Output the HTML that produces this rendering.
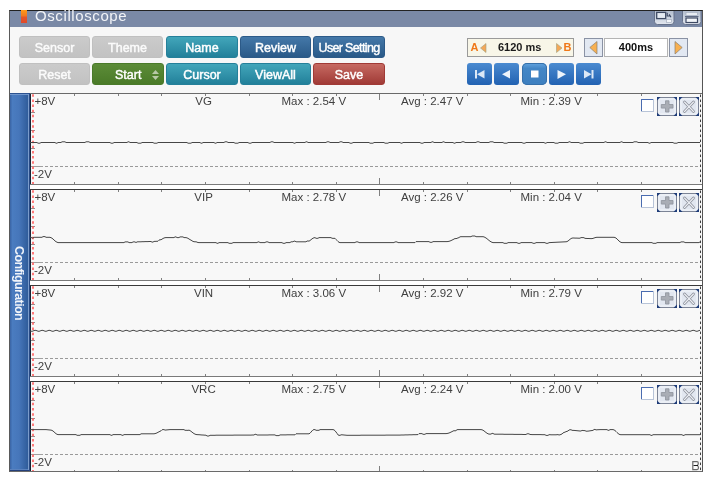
<!DOCTYPE html>
<html><head><meta charset="utf-8">
<style>
html,body{margin:0;padding:0;background:#fff;width:713px;height:481px;overflow:hidden;font-family:"Liberation Sans",sans-serif}
.a{position:absolute}
#frame{left:9px;top:10px;width:692px;height:460px;background:#f7f7f7;border-left:1px solid #5a5a5a;border-top:1px solid #222;border-right:1px solid #555;border-bottom:1px solid #6a6a6a;}
#title{left:10px;top:11px;width:692px;height:16px;background:#7a89a6}
#title .t{left:25px;top:-4px;font-size:15px;color:#f2f4f8;letter-spacing:0.6px}
#orange{left:21px;top:10px;width:6px;height:13px;background:linear-gradient(#ff9a1a,#f07a20 45%,#e4562a 55%,#e04a2a)}
.btn{position:absolute;height:22px;border-radius:3px;color:#fff;font-weight:normal;font-size:12.5px;-webkit-text-stroke:0.45px currentColor;text-align:center;line-height:22px;box-sizing:border-box}
.gray{background:linear-gradient(#cbcbcb,#c2c2c2);color:#fbfbfb;border:1px solid #c0c0c0}
.teal{background:linear-gradient(#42a6ba,#22809a);border:1px solid #25809a}
.blue{background:linear-gradient(#4478a8,#2a5a88);border:1px solid #2c5a88}
.green{background:linear-gradient(#5c8c38,#4a7a28);border:1px solid #4a7a2a}
.red{background:linear-gradient(#c66a62,#a03a36);border:1px solid #a03a36}
.pb{position:absolute;top:63px;width:25px;height:22px;border-radius:3px;background:linear-gradient(#4a8ad0,#2262b2)}
svg text.lb{font-family:"Liberation Sans",sans-serif;font-size:11.5px;fill:#404040}
</style></head><body><div style="position:absolute;left:0;top:0;width:713px;height:481px;will-change:transform">
<div id="frame" class="a"></div>
<div id="title" class="a"><div class="t a">Oscilloscope</div></div>
<div id="orange" class="a"></div>

<div class="btn gray" style="left:19px;top:36px;width:71px">Sensor</div>
<div class="btn gray" style="left:92px;top:36px;width:71px">Theme</div>
<div class="btn teal" style="left:166px;top:36px;width:72px">Name</div>
<div class="btn blue" style="left:240px;top:36px;width:71px">Review</div>
<div class="btn blue" style="left:313px;top:36px;width:72px;letter-spacing:-0.65px">User Setting</div>
<div class="btn gray" style="left:19px;top:63px;width:71px">Reset</div>
<div class="btn green" style="left:92px;top:63px;width:72px"><span style="position:absolute;left:22px;top:0">Start</span><span style="position:absolute;left:59px;top:6px;width:7px;height:10px"><svg width="7" height="10" style="display:block"><path d="M3.5,0 L7,4 L0,4 Z M3.5,10 L7,6 L0,6 Z" fill="#b8c8a8"/></svg></span></div>
<div class="btn teal" style="left:166px;top:63px;width:72px">Cursor</div>
<div class="btn teal" style="left:240px;top:63px;width:71px">ViewAll</div>
<div class="btn red" style="left:313px;top:63px;width:72px">Save</div>

<!-- A/B time box -->
<div class="a" style="left:467px;top:38px;width:105px;height:17px;background:#f8f6e8;border:1px solid #9a9a9a"></div>
<div class="a" style="left:470.5px;top:41.3px;font-size:11px;font-weight:bold;color:#f07818">A</div>
<svg class="a" style="left:479.5px;top:43px" width="7" height="11"><path d="M6,0.5 L0.5,5 L6,9.5 Z" fill="#f4a858" stroke="#a0a080" stroke-width="0.6"/></svg>
<div class="a" style="left:498px;top:40.5px;font-size:11px;font-weight:bold;color:#1a1a1a">6120 ms</div>
<svg class="a" style="left:555.5px;top:43px" width="7" height="11"><path d="M0.5,0.5 L6,5 L0.5,9.5 Z" fill="#f4a858" stroke="#a0a080" stroke-width="0.6"/></svg>
<div class="a" style="left:563.5px;top:41.3px;font-size:11px;font-weight:bold;color:#f07818">B</div>

<!-- 400ms -->
<div class="a" style="left:584px;top:38px;width:17px;height:17px;background:#e2e8f2;border:1px solid #8a92a4"></div>
<svg class="a" style="left:589px;top:41px" width="9" height="14"><path d="M8,0.5 L0.8,6.5 L8,13 Z" fill="#f8b050" stroke="#8a8070" stroke-width="0.7"/></svg>
<div class="a" style="left:604px;top:38px;width:62px;height:17px;background:#fff;border:1px solid #b4b4b4"></div>
<div class="a" style="left:604px;top:40.5px;width:64px;text-align:center;font-size:11px;font-weight:bold;color:#111">400ms</div>
<div class="a" style="left:669px;top:38px;width:17px;height:17px;background:#e2e8f2;border:1px solid #8a92a4"></div>
<svg class="a" style="left:674px;top:41px" width="9" height="14"><path d="M1,0.5 L8.2,6.5 L1,13 Z" fill="#f8b050" stroke="#8a8070" stroke-width="0.7"/></svg>

<!-- playback -->
<div class="pb" style="left:467px"><svg width="25" height="22"><rect x="8" y="7" width="2" height="8.5" fill="#dce8f6"/><path d="M17.5,7 L10,11.25 L17.5,15.5 Z" fill="#dce8f6"/></svg></div>
<div class="pb" style="left:494px"><svg width="25" height="22"><path d="M16,7 L8,11.25 L16,15.5 Z" fill="#eef4fb"/></svg></div>
<div class="pb" style="left:522px;width:25px;border-radius:5px;background:linear-gradient(#62a4e0,#4386c6 25%,#3d7fbf);box-shadow:inset 0 0 0 1px #3670aa"><svg width="25" height="22"><rect x="9" y="7.5" width="7.5" height="7" fill="#fff"/></svg></div>
<div class="pb" style="left:549px"><svg width="25" height="22"><path d="M8.5,7 L17,11.25 L8.5,16 Z" fill="#eef4fb"/></svg></div>
<div class="pb" style="left:576px"><svg width="25" height="22"><path d="M8,7 L15.5,11.25 L8,15.5 Z" fill="#dce8f6"/><rect x="15.5" y="7" width="2" height="8.5" fill="#dce8f6"/></svg></div>

<!-- title icons -->
<svg class="a" style="left:654px;top:11px" width="21" height="15">
 <defs><linearGradient id="ig" x1="0" y1="0" x2="0" y2="1"><stop offset="0" stop-color="#b4bfd0"/><stop offset="1" stop-color="#e2e7ef"/></linearGradient></defs>
 <path d="M0.5,0 V10.5 Q0.5,13.5 3.5,13.5 H17 Q20,13.5 20,10.5 V0" fill="url(#ig)" stroke="#65718a" stroke-width="1"/>
 <rect x="2.7" y="1.4" width="9" height="6.2" fill="#e4eaf2" stroke="#3e4a64" stroke-width="1.3"/>
 <rect x="12.5" y="8.6" width="5" height="3" fill="#f2f5f9" stroke="#9aa4b6" stroke-width="0.6"/>
 <path d="M13.2,1.8 V5 H16.2 M15.2,3.4 L17,6.2" stroke="#3a4660" stroke-width="1.1" fill="none"/>
</svg>
<svg class="a" style="left:682px;top:11px" width="20" height="15">
 <path d="M0.5,0 V10.5 Q0.5,13.5 3.5,13.5 H16 Q19,13.5 19,10.5 V0" fill="url(#ig)" stroke="#65718a" stroke-width="1"/>
 <rect x="4" y="1.4" width="11.5" height="3" fill="#e8edf4" stroke="#9aa4b6" stroke-width="0.6"/>
 <rect x="3" y="5" width="13.5" height="1" fill="#5e6a84"/>
 <rect x="4" y="7" width="11.5" height="4.5" fill="#f2f5f9" stroke="#3e4a64" stroke-width="1.2"/>
</svg>

<!-- sidebar -->
<div class="a" style="left:10px;top:93px;width:18px;height:378px;background:linear-gradient(90deg,#3a64a4 0px,#4a7cc0 2.5px,#4676ba 50%,#2f5c9a 100%)"></div>
<div class="a" style="left:10px;top:93px;width:20px;height:1px;background:#2c5290"></div>
<div class="a" style="left:10px;top:94px;width:18px;height:1px;background:#7096cc"></div>
<div class="a" style="left:10px;top:469px;width:18px;height:1px;background:#5a82be"></div>
<div class="a" style="left:10px;top:470px;width:20px;height:1px;background:#24407a"></div>
<div class="a" style="left:28px;top:94px;width:1px;height:376px;background:#7a9ccc"></div>
<div class="a" style="left:29px;top:93px;width:1px;height:378px;background:#2a4c86"></div>
<div class="a" style="left:30px;top:93px;width:1px;height:378px;background:#1a2232"></div>
<div class="a" style="left:13px;top:246px;width:74px;height:12px;transform-origin:0 0;transform:translate(12px,0) rotate(90deg);font-size:12.5px;font-weight:bold;color:#f0f4fa;letter-spacing:-0.6px;line-height:12px;white-space:nowrap">Configuration</div>

<svg class="a" style="left:0;top:0" width="702" height="471">
<rect x="31" y="93" width="671" height="91" fill="#f8f8f8"/>
<rect x="30" y="93" width="672" height="1" fill="#6a6a6a"/>
<rect x="30" y="184" width="672" height="1" fill="#7a7a7a"/>
<rect x="74" y="94" width="1" height="2" fill="#808080"/>
<rect x="74" y="182" width="1" height="2" fill="#808080"/>
<rect x="118" y="94" width="1" height="2" fill="#808080"/>
<rect x="118" y="182" width="1" height="2" fill="#808080"/>
<rect x="161" y="94" width="1" height="2" fill="#808080"/>
<rect x="161" y="182" width="1" height="2" fill="#808080"/>
<rect x="205" y="94" width="1" height="2" fill="#808080"/>
<rect x="205" y="182" width="1" height="2" fill="#808080"/>
<rect x="249" y="94" width="1" height="2" fill="#808080"/>
<rect x="249" y="182" width="1" height="2" fill="#808080"/>
<rect x="292" y="94" width="1" height="2" fill="#808080"/>
<rect x="292" y="182" width="1" height="2" fill="#808080"/>
<rect x="336" y="94" width="1" height="2" fill="#808080"/>
<rect x="336" y="182" width="1" height="2" fill="#808080"/>
<rect x="379" y="94" width="1" height="6" fill="#808080"/>
<rect x="379" y="178" width="1" height="6" fill="#808080"/>
<rect x="423" y="94" width="1" height="2" fill="#808080"/>
<rect x="423" y="182" width="1" height="2" fill="#808080"/>
<rect x="467" y="94" width="1" height="2" fill="#808080"/>
<rect x="467" y="182" width="1" height="2" fill="#808080"/>
<rect x="510" y="94" width="1" height="2" fill="#808080"/>
<rect x="510" y="182" width="1" height="2" fill="#808080"/>
<rect x="554" y="94" width="1" height="2" fill="#808080"/>
<rect x="554" y="182" width="1" height="2" fill="#808080"/>
<rect x="597" y="94" width="1" height="2" fill="#808080"/>
<rect x="597" y="182" width="1" height="2" fill="#808080"/>
<rect x="641" y="94" width="1" height="2" fill="#808080"/>
<rect x="641" y="182" width="1" height="2" fill="#808080"/>
<rect x="31" y="112" width="4" height="1" fill="#909090"/>
<rect x="31" y="130" width="4" height="1" fill="#909090"/>
<rect x="31" y="148" width="4" height="1" fill="#909090"/>
<rect x="31" y="166" width="12" height="1" fill="#a0a0a0"/>
<line x1="45" y1="166.5" x2="700" y2="166.5" stroke="#9a9a9a" stroke-width="1" stroke-dasharray="3,2"/>
<line x1="700.5" y1="94.55" x2="700.5" y2="184" stroke="#404040" stroke-width="1" stroke-dasharray="2.5,2.5"/>
<line x1="33" y1="94.25" x2="33" y2="184" stroke="#ff5a5a" stroke-width="1.6" stroke-dasharray="2.5,2.656"/>
<path d="M30.0,142.5 L31.0,142.5 L32.0,142.5 L33.0,142.5 L34.0,142.5 L35.0,142.5 L36.0,142.5 L37.0,142.5 L38.0,143.2 L39.0,143.2 L40.0,143.2 L41.0,142.5 L42.0,142.5 L43.0,142.5 L44.0,142.5 L45.0,142.5 L46.0,142.5 L47.0,142.5 L48.0,142.5 L49.0,142.5 L50.0,142.5 L51.0,142.5 L52.0,142.5 L53.0,142.5 L54.0,142.5 L55.0,142.5 L56.0,143.2 L57.0,143.2 L58.0,142.5 L59.0,142.5 L60.0,142.5 L61.0,142.5 L62.0,141.8 L63.0,141.8 L64.0,141.8 L65.0,141.8 L66.0,142.5 L67.0,142.5 L68.0,142.5 L69.0,142.5 L70.0,142.5 L71.0,142.5 L72.0,142.5 L73.0,142.5 L74.0,142.5 L75.0,142.5 L76.0,142.5 L77.0,142.5 L78.0,142.5 L79.0,142.5 L80.0,142.5 L81.0,142.5 L82.0,142.5 L83.0,142.5 L84.0,142.5 L85.0,142.5 L86.0,141.8 L87.0,141.8 L88.0,141.8 L89.0,141.8 L90.0,142.5 L91.0,142.5 L92.0,142.5 L93.0,142.5 L94.0,142.5 L95.0,142.5 L96.0,142.5 L97.0,142.5 L98.0,142.5 L99.0,142.5 L100.0,142.5 L101.0,142.5 L102.0,142.5 L103.0,142.5 L104.0,142.5 L105.0,142.5 L106.0,142.5 L107.0,142.5 L108.0,142.5 L109.0,142.5 L110.0,142.5 L111.0,143.2 L112.0,143.2 L113.0,143.2 L114.0,142.5 L115.0,142.5 L116.0,142.5 L117.0,142.5 L118.0,142.5 L119.0,142.5 L120.0,142.5 L121.0,142.5 L122.0,142.5 L123.0,142.5 L124.0,142.5 L125.0,142.5 L126.0,142.5 L127.0,142.5 L128.0,141.8 L129.0,141.8 L130.0,142.5 L131.0,142.5 L132.0,142.5 L133.0,142.5 L134.0,142.5 L135.0,142.5 L136.0,142.5 L137.0,142.5 L138.0,143.2 L139.0,143.2 L140.0,143.2 L141.0,143.2 L142.0,142.5 L143.0,142.5 L144.0,142.5 L145.0,142.5 L146.0,142.5 L147.0,142.5 L148.0,142.5 L149.0,142.5 L150.0,142.5 L151.0,142.5 L152.0,142.5 L153.0,142.5 L154.0,143.2 L155.0,143.2 L156.0,143.2 L157.0,143.2 L158.0,142.5 L159.0,142.5 L160.0,142.5 L161.0,142.5 L162.0,142.5 L163.0,142.5 L164.0,142.5 L165.0,142.5 L166.0,142.5 L167.0,142.5 L168.0,142.5 L169.0,142.5 L170.0,142.5 L171.0,142.5 L172.0,142.5 L173.0,142.5 L174.0,142.5 L175.0,142.5 L176.0,142.5 L177.0,142.5 L178.0,142.5 L179.0,142.5 L180.0,142.5 L181.0,142.5 L182.0,142.5 L183.0,142.5 L184.0,142.5 L185.0,142.5 L186.0,142.5 L187.0,142.5 L188.0,143.2 L189.0,143.2 L190.0,143.2 L191.0,143.2 L192.0,142.5 L193.0,142.5 L194.0,142.5 L195.0,142.5 L196.0,142.5 L197.0,142.5 L198.0,142.5 L199.0,142.5 L200.0,142.5 L201.0,143.2 L202.0,143.2 L203.0,142.5 L204.0,142.5 L205.0,142.5 L206.0,142.5 L207.0,142.5 L208.0,142.5 L209.0,142.5 L210.0,142.5 L211.0,142.5 L212.0,142.5 L213.0,142.5 L214.0,142.5 L215.0,143.2 L216.0,143.2 L217.0,142.5 L218.0,142.5 L219.0,142.5 L220.0,142.5 L221.0,142.5 L222.0,142.5 L223.0,142.5 L224.0,142.5 L225.0,141.8 L226.0,141.8 L227.0,141.8 L228.0,142.5 L229.0,142.5 L230.0,142.5 L231.0,142.5 L232.0,142.5 L233.0,142.5 L234.0,142.5 L235.0,143.2 L236.0,143.2 L237.0,143.2 L238.0,143.2 L239.0,142.5 L240.0,142.5 L241.0,142.5 L242.0,142.5 L243.0,142.5 L244.0,142.5 L245.0,142.5 L246.0,142.5 L247.0,142.5 L248.0,142.5 L249.0,143.2 L250.0,143.2 L251.0,143.2 L252.0,142.5 L253.0,142.5 L254.0,142.5 L255.0,142.5 L256.0,142.5 L257.0,142.5 L258.0,142.5 L259.0,142.5 L260.0,142.5 L261.0,142.5 L262.0,142.5 L263.0,142.5 L264.0,142.5 L265.0,142.5 L266.0,142.5 L267.0,142.5 L268.0,142.5 L269.0,142.5 L270.0,142.5 L271.0,141.8 L272.0,141.8 L273.0,141.8 L274.0,142.5 L275.0,142.5 L276.0,142.5 L277.0,142.5 L278.0,142.5 L279.0,142.5 L280.0,142.5 L281.0,142.5 L282.0,142.5 L283.0,142.5 L284.0,142.5 L285.0,142.5 L286.0,142.5 L287.0,142.5 L288.0,142.5 L289.0,142.5 L290.0,142.5 L291.0,142.5 L292.0,142.5 L293.0,142.5 L294.0,143.2 L295.0,143.2 L296.0,142.5 L297.0,142.5 L298.0,142.5 L299.0,142.5 L300.0,142.5 L301.0,142.5 L302.0,142.5 L303.0,142.5 L304.0,142.5 L305.0,142.5 L306.0,141.8 L307.0,141.8 L308.0,142.5 L309.0,142.5 L310.0,142.5 L311.0,142.5 L312.0,142.5 L313.0,142.5 L314.0,142.5 L315.0,142.5 L316.0,142.5 L317.0,142.5 L318.0,142.5 L319.0,142.5 L320.0,142.5 L321.0,142.5 L322.0,142.5 L323.0,142.5 L324.0,142.5 L325.0,142.5 L326.0,142.5 L327.0,141.8 L328.0,141.8 L329.0,141.8 L330.0,142.5 L331.0,142.5 L332.0,142.5 L333.0,142.5 L334.0,142.5 L335.0,142.5 L336.0,142.5 L337.0,142.5 L338.0,142.5 L339.0,142.5 L340.0,141.8 L341.0,141.8 L342.0,141.8 L343.0,142.5 L344.0,142.5 L345.0,142.5 L346.0,142.5 L347.0,142.5 L348.0,142.5 L349.0,142.5 L350.0,143.2 L351.0,143.2 L352.0,143.2 L353.0,142.5 L354.0,142.5 L355.0,142.5 L356.0,142.5 L357.0,142.5 L358.0,142.5 L359.0,142.5 L360.0,142.5 L361.0,142.5 L362.0,142.5 L363.0,142.5 L364.0,142.5 L365.0,142.5 L366.0,142.5 L367.0,142.5 L368.0,142.5 L369.0,142.5 L370.0,143.2 L371.0,143.2 L372.0,143.2 L373.0,143.2 L374.0,142.5 L375.0,142.5 L376.0,142.5 L377.0,142.5 L378.0,142.5 L379.0,142.5 L380.0,142.5 L381.0,142.5 L382.0,142.5 L383.0,142.5 L384.0,142.5 L385.0,143.2 L386.0,143.2 L387.0,143.2 L388.0,143.2 L389.0,142.5 L390.0,142.5 L391.0,142.5 L392.0,142.5 L393.0,142.5 L394.0,142.5 L395.0,142.5 L396.0,142.5 L397.0,142.5 L398.0,142.5 L399.0,142.5 L400.0,142.5 L401.0,143.2 L402.0,143.2 L403.0,142.5 L404.0,142.5 L405.0,142.5 L406.0,142.5 L407.0,142.5 L408.0,142.5 L409.0,142.5 L410.0,142.5 L411.0,142.5 L412.0,142.5 L413.0,142.5 L414.0,142.5 L415.0,142.5 L416.0,142.5 L417.0,142.5 L418.0,142.5 L419.0,142.5 L420.0,142.5 L421.0,143.2 L422.0,143.2 L423.0,143.2 L424.0,142.5 L425.0,142.5 L426.0,142.5 L427.0,142.5 L428.0,142.5 L429.0,142.5 L430.0,142.5 L431.0,142.5 L432.0,141.8 L433.0,141.8 L434.0,142.5 L435.0,142.5 L436.0,142.5 L437.0,142.5 L438.0,142.5 L439.0,142.5 L440.0,142.5 L441.0,142.5 L442.0,142.5 L443.0,141.8 L444.0,141.8 L445.0,142.5 L446.0,142.5 L447.0,142.5 L448.0,142.5 L449.0,142.5 L450.0,142.5 L451.0,142.5 L452.0,142.5 L453.0,142.5 L454.0,143.2 L455.0,143.2 L456.0,142.5 L457.0,142.5 L458.0,142.5 L459.0,142.5 L460.0,142.5 L461.0,142.5 L462.0,141.8 L463.0,141.8 L464.0,141.8 L465.0,142.5 L466.0,142.5 L467.0,142.5 L468.0,142.5 L469.0,142.5 L470.0,142.5 L471.0,142.5 L472.0,142.5 L473.0,142.5 L474.0,142.5 L475.0,142.5 L476.0,142.5 L477.0,141.8 L478.0,141.8 L479.0,141.8 L480.0,142.5 L481.0,142.5 L482.0,142.5 L483.0,142.5 L484.0,142.5 L485.0,142.5 L486.0,142.5 L487.0,142.5 L488.0,142.5 L489.0,142.5 L490.0,141.8 L491.0,141.8 L492.0,141.8 L493.0,141.8 L494.0,142.5 L495.0,142.5 L496.0,142.5 L497.0,142.5 L498.0,142.5 L499.0,142.5 L500.0,142.5 L501.0,142.5 L502.0,142.5 L503.0,142.5 L504.0,143.2 L505.0,143.2 L506.0,143.2 L507.0,143.2 L508.0,142.5 L509.0,142.5 L510.0,142.5 L511.0,142.5 L512.0,142.5 L513.0,142.5 L514.0,142.5 L515.0,142.5 L516.0,142.5 L517.0,142.5 L518.0,142.5 L519.0,142.5 L520.0,142.5 L521.0,142.5 L522.0,142.5 L523.0,143.2 L524.0,143.2 L525.0,143.2 L526.0,142.5 L527.0,142.5 L528.0,142.5 L529.0,142.5 L530.0,142.5 L531.0,142.5 L532.0,142.5 L533.0,142.5 L534.0,142.5 L535.0,142.5 L536.0,142.5 L537.0,142.5 L538.0,142.5 L539.0,142.5 L540.0,142.5 L541.0,142.5 L542.0,142.5 L543.0,142.5 L544.0,142.5 L545.0,143.2 L546.0,143.2 L547.0,142.5 L548.0,142.5 L549.0,142.5 L550.0,142.5 L551.0,142.5 L552.0,142.5 L553.0,142.5 L554.0,142.5 L555.0,143.2 L556.0,143.2 L557.0,143.2 L558.0,143.2 L559.0,142.5 L560.0,142.5 L561.0,142.5 L562.0,142.5 L563.0,142.5 L564.0,142.5 L565.0,142.5 L566.0,142.5 L567.0,142.5 L568.0,142.5 L569.0,141.8 L570.0,141.8 L571.0,142.5 L572.0,142.5 L573.0,142.5 L574.0,142.5 L575.0,142.5 L576.0,142.5 L577.0,142.5 L578.0,142.5 L579.0,142.5 L580.0,143.2 L581.0,143.2 L582.0,143.2 L583.0,143.2 L584.0,142.5 L585.0,142.5 L586.0,142.5 L587.0,142.5 L588.0,142.5 L589.0,142.5 L590.0,142.5 L591.0,142.5 L592.0,142.5 L593.0,142.5 L594.0,142.5 L595.0,142.5 L596.0,142.5 L597.0,142.5 L598.0,142.5 L599.0,142.5 L600.0,142.5 L601.0,142.5 L602.0,142.5 L603.0,142.5 L604.0,142.5 L605.0,141.8 L606.0,141.8 L607.0,142.5 L608.0,142.5 L609.0,142.5 L610.0,142.5 L611.0,142.5 L612.0,142.5 L613.0,142.5 L614.0,142.5 L615.0,142.5 L616.0,142.5 L617.0,142.5 L618.0,142.5 L619.0,142.5 L620.0,142.5 L621.0,141.8 L622.0,141.8 L623.0,142.5 L624.0,142.5 L625.0,142.5 L626.0,142.5 L627.0,142.5 L628.0,142.5 L629.0,142.5 L630.0,142.5 L631.0,142.5 L632.0,142.5 L633.0,142.5 L634.0,141.8 L635.0,141.8 L636.0,141.8 L637.0,141.8 L638.0,142.5 L639.0,142.5 L640.0,142.5 L641.0,142.5 L642.0,142.5 L643.0,142.5 L644.0,142.5 L645.0,142.5 L646.0,142.5 L647.0,142.5 L648.0,142.5 L649.0,143.2 L650.0,143.2 L651.0,142.5 L652.0,142.5 L653.0,142.5 L654.0,142.5 L655.0,142.5 L656.0,142.5 L657.0,142.5 L658.0,142.5 L659.0,142.5 L660.0,142.5 L661.0,142.5 L662.0,142.5 L663.0,142.5 L664.0,142.5 L665.0,142.5 L666.0,142.5 L667.0,142.5 L668.0,142.5 L669.0,142.5 L670.0,142.5 L671.0,142.5 L672.0,142.5 L673.0,142.5 L674.0,143.2 L675.0,143.2 L676.0,143.2 L677.0,143.2 L678.0,142.5 L679.0,142.5 L680.0,142.5 L681.0,142.5 L682.0,142.5 L683.0,142.5 L684.0,142.5 L685.0,142.5 L686.0,142.5 L687.0,142.5 L688.0,142.5 L689.0,142.5 L690.0,142.5 L691.0,142.5 L692.0,142.5 L693.0,142.5 L694.0,142.5 L695.0,142.5 L696.0,142.5 L697.0,142.5 L698.0,142.5 L699.0,142.5 L700.0,142.5" fill="none" stroke="#464646" stroke-width="1"/>
<text x="34.5" y="105" class="lb">+8V</text>
<text x="34" y="178" class="lb">-2V</text>
<text x="203.6" y="105" class="lb" text-anchor="middle">VG</text>
<text x="281.5" y="105" class="lb">Max : 2.54 V</text>
<text x="401" y="105" class="lb">Avg : 2.47 V</text>
<text x="520.5" y="105" class="lb">Min : 2.39 V</text>
<rect x="641" y="99" width="13" height="13" fill="#b8c4d8"/><rect x="641" y="99" width="12" height="12" fill="#4a6cb0"/><rect x="642" y="100" width="11" height="11" fill="#fff"/>
<rect x="657.5" y="97.5" width="19" height="18" fill="#e2e7f0" stroke="#7c8496" stroke-width="1"/>
<rect x="659" y="99" width="16" height="15" rx="1.5" fill="none" stroke="#f4f7fb" stroke-width="1"/>
<path transform="translate(657,97)" d="M0,0 h3.5 l-3.5,3.5 z" fill="#1e3c78"/>
<path transform="translate(677,97)" d="M0,0 h-3.5 l3.5,3.5 z" fill="#1e3c78"/>
<path transform="translate(657,116)" d="M0,0 h3.5 l-3.5,-3.5 z" fill="#1e3c78"/>
<path transform="translate(677,116)" d="M0,0 h-3.5 l3.5,-3.5 z" fill="#1e3c78"/>
<path d="M665.5,100.8 h3.5 v3.7 h4 v3.6 h-4 v3.9 h-3.5 v-3.9 h-4.2 v-3.6 h4.2 z" fill="#a9adb5" stroke="#8e939c" stroke-width="0.8"/>
<rect x="679.5" y="97.5" width="19" height="18" fill="#e2e7f0" stroke="#7c8496" stroke-width="1"/>
<rect x="681" y="99" width="16" height="15" rx="1.5" fill="none" stroke="#f4f7fb" stroke-width="1"/>
<path transform="translate(679,97)" d="M0,0 h3.5 l-3.5,3.5 z" fill="#1e3c78"/>
<path transform="translate(699,97)" d="M0,0 h-3.5 l3.5,3.5 z" fill="#1e3c78"/>
<path transform="translate(679,116)" d="M0,0 h3.5 l-3.5,-3.5 z" fill="#1e3c78"/>
<path transform="translate(699,116)" d="M0,0 h-3.5 l3.5,-3.5 z" fill="#1e3c78"/>
<path d="M684.5,102 L693.5,111.5 M693.5,102 L684.5,111.5" stroke="#8a8e98" stroke-width="2.6" stroke-linecap="round"/>
<path d="M684.5,102 L693.5,111.5 M693.5,102 L684.5,111.5" stroke="#eef1f6" stroke-width="1.1" stroke-linecap="round"/>
<rect x="30" y="185" width="672" height="4" fill="#ffffff"/>
<rect x="30" y="189" width="672" height="1" fill="#404040"/>
<rect x="31" y="189" width="671" height="91" fill="#f8f8f8"/>
<rect x="30" y="189" width="672" height="1" fill="#3a3a3a"/>
<rect x="30" y="280" width="672" height="1" fill="#7a7a7a"/>
<rect x="74" y="190" width="1" height="2" fill="#808080"/>
<rect x="74" y="278" width="1" height="2" fill="#808080"/>
<rect x="118" y="190" width="1" height="2" fill="#808080"/>
<rect x="118" y="278" width="1" height="2" fill="#808080"/>
<rect x="161" y="190" width="1" height="2" fill="#808080"/>
<rect x="161" y="278" width="1" height="2" fill="#808080"/>
<rect x="205" y="190" width="1" height="2" fill="#808080"/>
<rect x="205" y="278" width="1" height="2" fill="#808080"/>
<rect x="249" y="190" width="1" height="2" fill="#808080"/>
<rect x="249" y="278" width="1" height="2" fill="#808080"/>
<rect x="292" y="190" width="1" height="2" fill="#808080"/>
<rect x="292" y="278" width="1" height="2" fill="#808080"/>
<rect x="336" y="190" width="1" height="2" fill="#808080"/>
<rect x="336" y="278" width="1" height="2" fill="#808080"/>
<rect x="379" y="190" width="1" height="6" fill="#808080"/>
<rect x="379" y="274" width="1" height="6" fill="#808080"/>
<rect x="423" y="190" width="1" height="2" fill="#808080"/>
<rect x="423" y="278" width="1" height="2" fill="#808080"/>
<rect x="467" y="190" width="1" height="2" fill="#808080"/>
<rect x="467" y="278" width="1" height="2" fill="#808080"/>
<rect x="510" y="190" width="1" height="2" fill="#808080"/>
<rect x="510" y="278" width="1" height="2" fill="#808080"/>
<rect x="554" y="190" width="1" height="2" fill="#808080"/>
<rect x="554" y="278" width="1" height="2" fill="#808080"/>
<rect x="597" y="190" width="1" height="2" fill="#808080"/>
<rect x="597" y="278" width="1" height="2" fill="#808080"/>
<rect x="641" y="190" width="1" height="2" fill="#808080"/>
<rect x="641" y="278" width="1" height="2" fill="#808080"/>
<rect x="31" y="208" width="4" height="1" fill="#909090"/>
<rect x="31" y="226" width="4" height="1" fill="#909090"/>
<rect x="31" y="244" width="4" height="1" fill="#909090"/>
<rect x="31" y="262" width="12" height="1" fill="#a0a0a0"/>
<line x1="45" y1="262.5" x2="700" y2="262.5" stroke="#9a9a9a" stroke-width="1" stroke-dasharray="3,2"/>
<line x1="700.5" y1="190.55" x2="700.5" y2="280" stroke="#404040" stroke-width="1" stroke-dasharray="2.5,2.5"/>
<line x1="33" y1="190.25" x2="33" y2="280" stroke="#ff5a5a" stroke-width="1.6" stroke-dasharray="2.5,2.656"/>
<path d="M30.0,237.3 L31.0,237.3 L32.0,238.0 L33.0,238.0 L34.0,237.3 L35.0,237.3 L36.0,237.3 L37.0,237.3 L38.0,237.3 L39.0,237.3 L40.0,237.3 L41.0,237.3 L42.0,237.3 L43.0,236.6 L44.0,236.6 L45.0,236.6 L46.0,237.3 L47.0,237.3 L48.0,237.3 L49.0,237.3 L50.0,237.3 L51.0,237.7 L52.0,238.2 L53.0,239.0 L54.0,240.0 L55.0,240.9 L56.0,241.7 L57.0,242.2 L58.0,242.6 L59.0,242.6 L60.0,242.6 L61.0,242.6 L62.0,242.6 L63.0,242.6 L64.0,242.6 L65.0,242.6 L66.0,242.6 L67.0,242.6 L68.0,242.6 L69.0,242.6 L70.0,242.6 L71.0,242.6 L72.0,242.6 L73.0,242.6 L74.0,242.6 L75.0,242.6 L76.0,242.6 L77.0,242.6 L78.0,242.6 L79.0,242.6 L80.0,242.6 L81.0,242.6 L82.0,242.6 L83.0,242.6 L84.0,242.6 L85.0,242.6 L86.0,242.6 L87.0,242.6 L88.0,242.6 L89.0,242.6 L90.0,242.6 L91.0,242.6 L92.0,242.6 L93.0,242.6 L94.0,242.6 L95.0,242.6 L96.0,242.6 L97.0,242.6 L98.0,242.6 L99.0,242.6 L100.0,242.6 L101.0,242.6 L102.0,242.6 L103.0,242.6 L104.0,242.6 L105.0,242.6 L106.0,242.6 L107.0,242.6 L108.0,242.6 L109.0,242.6 L110.0,242.6 L111.0,242.6 L112.0,242.6 L113.0,242.6 L114.0,242.6 L115.0,242.6 L116.0,242.6 L117.0,242.6 L118.0,242.6 L119.0,242.6 L120.0,242.6 L121.0,242.6 L122.0,242.6 L123.0,242.6 L124.0,242.6 L125.0,241.9 L126.0,241.9 L127.0,241.9 L128.0,241.9 L129.0,242.6 L130.0,242.6 L131.0,242.6 L132.0,242.6 L133.0,241.9 L134.0,241.9 L135.0,241.9 L136.0,242.6 L137.0,241.9 L138.0,241.8 L139.0,241.8 L140.0,241.8 L141.0,241.8 L142.0,241.7 L143.0,241.7 L144.0,241.7 L145.0,241.6 L146.0,241.6 L147.0,241.6 L148.0,241.6 L149.0,241.5 L150.0,241.5 L151.0,241.5 L152.0,242.1 L153.0,242.1 L154.0,241.4 L155.0,241.4 L156.0,241.3 L157.0,241.3 L158.0,241.2 L159.0,240.2 L160.0,239.7 L161.0,239.8 L162.0,239.1 L163.0,238.5 L164.0,238.0 L165.0,237.7 L166.0,237.6 L167.0,237.6 L168.0,237.6 L169.0,237.6 L170.0,237.6 L171.0,237.6 L172.0,237.6 L173.0,237.6 L174.0,237.6 L175.0,236.9 L176.0,236.9 L177.0,237.6 L178.0,237.6 L179.0,237.6 L180.0,236.9 L181.0,236.9 L182.0,236.9 L183.0,236.9 L184.0,237.6 L185.0,237.6 L186.0,237.6 L187.0,237.9 L188.0,238.3 L189.0,239.0 L190.0,239.6 L191.0,240.2 L192.0,240.7 L193.0,241.5 L194.0,241.6 L195.0,241.9 L196.0,241.7 L197.0,242.2 L198.0,242.5 L199.0,242.6 L200.0,242.6 L201.0,242.6 L202.0,242.6 L203.0,242.6 L204.0,242.6 L205.0,242.6 L206.0,242.6 L207.0,242.6 L208.0,242.6 L209.0,242.6 L210.0,242.6 L211.0,242.6 L212.0,242.6 L213.0,242.6 L214.0,242.6 L215.0,242.6 L216.0,242.6 L217.0,243.3 L218.0,243.3 L219.0,242.6 L220.0,242.6 L221.0,242.6 L222.0,242.6 L223.0,242.6 L224.0,242.6 L225.0,242.6 L226.0,242.6 L227.0,242.6 L228.0,242.6 L229.0,243.3 L230.0,243.3 L231.0,243.3 L232.0,243.3 L233.0,242.6 L234.0,242.6 L235.0,242.6 L236.0,242.6 L237.0,242.6 L238.0,242.6 L239.0,242.6 L240.0,242.6 L241.0,242.6 L242.0,242.6 L243.0,242.6 L244.0,242.6 L245.0,242.6 L246.0,242.6 L247.0,242.6 L248.0,242.6 L249.0,242.6 L250.0,242.6 L251.0,242.6 L252.0,242.6 L253.0,242.6 L254.0,242.6 L255.0,242.6 L256.0,242.6 L257.0,242.6 L258.0,241.9 L259.0,241.9 L260.0,242.6 L261.0,242.6 L262.0,242.6 L263.0,242.6 L264.0,242.6 L265.0,242.6 L266.0,241.9 L267.0,241.9 L268.0,241.9 L269.0,242.6 L270.0,242.6 L271.0,242.6 L272.0,242.6 L273.0,242.6 L274.0,242.6 L275.0,242.6 L276.0,242.6 L277.0,242.6 L278.0,242.6 L279.0,242.6 L280.0,242.6 L281.0,242.6 L282.0,242.6 L283.0,243.3 L284.0,243.3 L285.0,243.3 L286.0,242.6 L287.0,242.6 L288.0,242.6 L289.0,242.6 L290.0,242.6 L291.0,241.8 L292.0,241.8 L293.0,241.8 L294.0,241.1 L295.0,241.1 L296.0,241.8 L297.0,241.8 L298.0,241.8 L299.0,241.8 L300.0,241.8 L301.0,241.8 L302.0,241.8 L303.0,241.8 L304.0,241.8 L305.0,241.8 L306.0,241.8 L307.0,241.1 L308.0,240.9 L309.0,241.2 L310.0,240.5 L311.0,239.7 L312.0,238.9 L313.0,238.2 L314.0,237.8 L315.0,237.6 L316.0,238.3 L317.0,238.3 L318.0,238.3 L319.0,237.6 L320.0,237.6 L321.0,237.6 L322.0,237.6 L323.0,237.6 L324.0,237.6 L325.0,237.6 L326.0,237.6 L327.0,237.6 L328.0,237.6 L329.0,237.6 L330.0,237.6 L331.0,237.6 L332.0,238.3 L333.0,238.3 L334.0,238.4 L335.0,238.3 L336.0,239.3 L337.0,240.5 L338.0,241.5 L339.0,242.3 L340.0,242.6 L341.0,242.6 L342.0,242.6 L343.0,242.6 L344.0,242.6 L345.0,242.6 L346.0,242.6 L347.0,242.6 L348.0,242.6 L349.0,242.6 L350.0,242.6 L351.0,242.6 L352.0,242.6 L353.0,242.6 L354.0,242.6 L355.0,242.6 L356.0,241.9 L357.0,241.9 L358.0,241.9 L359.0,242.6 L360.0,242.6 L361.0,242.6 L362.0,242.6 L363.0,242.6 L364.0,242.6 L365.0,242.6 L366.0,242.6 L367.0,242.6 L368.0,242.6 L369.0,242.6 L370.0,242.6 L371.0,242.6 L372.0,242.6 L373.0,242.6 L374.0,242.6 L375.0,242.6 L376.0,242.6 L377.0,242.6 L378.0,242.6 L379.0,242.6 L380.0,242.6 L381.0,242.6 L382.0,242.6 L383.0,242.6 L384.0,242.6 L385.0,242.6 L386.0,242.6 L387.0,242.6 L388.0,242.6 L389.0,242.6 L390.0,242.6 L391.0,242.6 L392.0,242.6 L393.0,242.6 L394.0,242.6 L395.0,241.9 L396.0,241.9 L397.0,241.9 L398.0,242.6 L399.0,242.6 L400.0,242.6 L401.0,242.6 L402.0,242.6 L403.0,242.6 L404.0,242.6 L405.0,242.6 L406.0,242.6 L407.0,242.6 L408.0,242.6 L409.0,242.6 L410.0,242.6 L411.0,242.6 L412.0,242.6 L413.0,242.6 L414.0,242.6 L415.0,242.6 L416.0,241.6 L417.0,241.6 L418.0,241.6 L419.0,241.6 L420.0,241.6 L421.0,241.6 L422.0,241.6 L423.0,241.6 L424.0,241.6 L425.0,241.6 L426.0,241.6 L427.0,241.6 L428.0,241.6 L429.0,241.6 L430.0,242.3 L431.0,242.3 L432.0,242.3 L433.0,241.6 L434.0,241.6 L435.0,241.6 L436.0,241.6 L437.0,241.6 L438.0,241.6 L439.0,241.6 L440.0,241.6 L441.0,241.6 L442.0,241.6 L443.0,241.6 L444.0,241.6 L445.0,241.6 L446.0,241.6 L447.0,241.6 L448.0,241.5 L449.0,241.3 L450.0,241.0 L451.0,240.6 L452.0,240.1 L453.0,239.6 L454.0,239.1 L455.0,238.5 L456.0,238.7 L457.0,238.3 L458.0,237.9 L459.0,237.6 L460.0,236.8 L461.0,236.7 L462.0,236.7 L463.0,236.7 L464.0,236.7 L465.0,236.7 L466.0,236.7 L467.0,236.7 L468.0,236.7 L469.0,236.7 L470.0,236.7 L471.0,236.7 L472.0,236.0 L473.0,236.0 L474.0,236.0 L475.0,236.0 L476.0,236.7 L477.0,236.7 L478.0,236.7 L479.0,236.7 L480.0,236.7 L481.0,236.7 L482.0,236.7 L483.0,236.7 L484.0,236.9 L485.0,237.4 L486.0,238.0 L487.0,238.7 L488.0,239.6 L489.0,240.4 L490.0,241.2 L491.0,241.8 L492.0,242.3 L493.0,242.6 L494.0,242.6 L495.0,242.6 L496.0,242.6 L497.0,242.6 L498.0,242.6 L499.0,242.6 L500.0,242.6 L501.0,242.6 L502.0,242.6 L503.0,242.6 L504.0,243.3 L505.0,243.3 L506.0,243.3 L507.0,243.3 L508.0,242.6 L509.0,242.6 L510.0,242.6 L511.0,242.6 L512.0,242.6 L513.0,242.6 L514.0,242.6 L515.0,242.6 L516.0,242.6 L517.0,242.6 L518.0,243.3 L519.0,243.3 L520.0,243.3 L521.0,242.6 L522.0,242.6 L523.0,242.6 L524.0,242.6 L525.0,242.6 L526.0,242.6 L527.0,242.6 L528.0,242.6 L529.0,242.6 L530.0,242.6 L531.0,242.6 L532.0,242.6 L533.0,243.3 L534.0,243.3 L535.0,243.3 L536.0,242.6 L537.0,242.6 L538.0,242.6 L539.0,242.6 L540.0,242.6 L541.0,242.6 L542.0,242.6 L543.0,242.6 L544.0,242.6 L545.0,242.6 L546.0,243.3 L547.0,243.3 L548.0,243.3 L549.0,242.6 L550.0,242.6 L551.0,242.5 L552.0,242.5 L553.0,242.4 L554.0,242.4 L555.0,242.3 L556.0,242.3 L557.0,242.2 L558.0,242.2 L559.0,242.1 L560.0,242.1 L561.0,242.0 L562.0,242.0 L563.0,241.9 L564.0,241.9 L565.0,241.8 L566.0,241.8 L567.0,241.6 L568.0,241.0 L569.0,240.2 L570.0,239.3 L571.0,238.6 L572.0,238.1 L573.0,238.0 L574.0,238.0 L575.0,238.1 L576.0,238.1 L577.0,238.1 L578.0,238.2 L579.0,238.2 L580.0,238.2 L581.0,237.6 L582.0,237.6 L583.0,237.6 L584.0,237.7 L585.0,238.4 L586.0,238.4 L587.0,238.5 L588.0,238.5 L589.0,238.5 L590.0,238.6 L591.0,238.6 L592.0,238.6 L593.0,238.4 L594.0,238.0 L595.0,237.7 L596.0,237.4 L597.0,237.3 L598.0,237.3 L599.0,237.3 L600.0,237.3 L601.0,237.3 L602.0,237.3 L603.0,237.3 L604.0,237.3 L605.0,237.3 L606.0,237.3 L607.0,237.3 L608.0,237.3 L609.0,237.3 L610.0,237.3 L611.0,237.3 L612.0,237.3 L613.0,237.3 L614.0,237.3 L615.0,237.5 L616.0,238.1 L617.0,238.9 L618.0,240.0 L619.0,241.0 L620.0,241.8 L621.0,242.4 L622.0,242.6 L623.0,242.6 L624.0,242.6 L625.0,242.6 L626.0,242.6 L627.0,242.6 L628.0,242.6 L629.0,242.6 L630.0,242.6 L631.0,242.6 L632.0,242.6 L633.0,242.6 L634.0,242.6 L635.0,242.6 L636.0,242.6 L637.0,242.6 L638.0,242.6 L639.0,242.6 L640.0,242.6 L641.0,242.6 L642.0,242.6 L643.0,242.6 L644.0,242.6 L645.0,242.6 L646.0,242.6 L647.0,242.6 L648.0,242.6 L649.0,242.6 L650.0,242.6 L651.0,242.6 L652.0,242.6 L653.0,243.3 L654.0,243.3 L655.0,243.3 L656.0,243.3 L657.0,242.6 L658.0,242.6 L659.0,242.6 L660.0,242.6 L661.0,242.6 L662.0,242.6 L663.0,242.6 L664.0,242.6 L665.0,242.6 L666.0,242.6 L667.0,242.6 L668.0,242.6 L669.0,242.6 L670.0,242.6 L671.0,242.6 L672.0,242.6 L673.0,242.6 L674.0,242.6 L675.0,242.6 L676.0,242.6 L677.0,242.6 L678.0,242.6 L679.0,242.6 L680.0,242.6 L681.0,241.9 L682.0,241.9 L683.0,241.9 L684.0,241.9 L685.0,242.6 L686.0,242.6 L687.0,242.6 L688.0,242.6 L689.0,242.6 L690.0,242.6 L691.0,242.6 L692.0,242.6 L693.0,242.6 L694.0,242.6 L695.0,242.6 L696.0,242.6 L697.0,242.6 L698.0,242.6 L699.0,242.6 L700.0,241.9" fill="none" stroke="#464646" stroke-width="1"/>
<text x="34.5" y="201" class="lb">+8V</text>
<text x="34" y="274" class="lb">-2V</text>
<text x="203.6" y="201" class="lb" text-anchor="middle">VIP</text>
<text x="281.5" y="201" class="lb">Max : 2.78 V</text>
<text x="401" y="201" class="lb">Avg : 2.26 V</text>
<text x="520.5" y="201" class="lb">Min : 2.04 V</text>
<rect x="641" y="195" width="13" height="13" fill="#b8c4d8"/><rect x="641" y="195" width="12" height="12" fill="#4a6cb0"/><rect x="642" y="196" width="11" height="11" fill="#fff"/>
<rect x="657.5" y="193.5" width="19" height="18" fill="#e2e7f0" stroke="#7c8496" stroke-width="1"/>
<rect x="659" y="195" width="16" height="15" rx="1.5" fill="none" stroke="#f4f7fb" stroke-width="1"/>
<path transform="translate(657,193)" d="M0,0 h3.5 l-3.5,3.5 z" fill="#1e3c78"/>
<path transform="translate(677,193)" d="M0,0 h-3.5 l3.5,3.5 z" fill="#1e3c78"/>
<path transform="translate(657,212)" d="M0,0 h3.5 l-3.5,-3.5 z" fill="#1e3c78"/>
<path transform="translate(677,212)" d="M0,0 h-3.5 l3.5,-3.5 z" fill="#1e3c78"/>
<path d="M665.5,196.8 h3.5 v3.7 h4 v3.6 h-4 v3.9 h-3.5 v-3.9 h-4.2 v-3.6 h4.2 z" fill="#a9adb5" stroke="#8e939c" stroke-width="0.8"/>
<rect x="679.5" y="193.5" width="19" height="18" fill="#e2e7f0" stroke="#7c8496" stroke-width="1"/>
<rect x="681" y="195" width="16" height="15" rx="1.5" fill="none" stroke="#f4f7fb" stroke-width="1"/>
<path transform="translate(679,193)" d="M0,0 h3.5 l-3.5,3.5 z" fill="#1e3c78"/>
<path transform="translate(699,193)" d="M0,0 h-3.5 l3.5,3.5 z" fill="#1e3c78"/>
<path transform="translate(679,212)" d="M0,0 h3.5 l-3.5,-3.5 z" fill="#1e3c78"/>
<path transform="translate(699,212)" d="M0,0 h-3.5 l3.5,-3.5 z" fill="#1e3c78"/>
<path d="M684.5,198 L693.5,207.5 M693.5,198 L684.5,207.5" stroke="#8a8e98" stroke-width="2.6" stroke-linecap="round"/>
<path d="M684.5,198 L693.5,207.5 M693.5,198 L684.5,207.5" stroke="#eef1f6" stroke-width="1.1" stroke-linecap="round"/>
<rect x="30" y="281" width="672" height="4" fill="#ffffff"/>
<rect x="30" y="285" width="672" height="1" fill="#404040"/>
<rect x="31" y="285" width="671" height="91" fill="#f8f8f8"/>
<rect x="30" y="285" width="672" height="1" fill="#3a3a3a"/>
<rect x="30" y="376" width="672" height="1" fill="#7a7a7a"/>
<rect x="74" y="286" width="1" height="2" fill="#808080"/>
<rect x="74" y="374" width="1" height="2" fill="#808080"/>
<rect x="118" y="286" width="1" height="2" fill="#808080"/>
<rect x="118" y="374" width="1" height="2" fill="#808080"/>
<rect x="161" y="286" width="1" height="2" fill="#808080"/>
<rect x="161" y="374" width="1" height="2" fill="#808080"/>
<rect x="205" y="286" width="1" height="2" fill="#808080"/>
<rect x="205" y="374" width="1" height="2" fill="#808080"/>
<rect x="249" y="286" width="1" height="2" fill="#808080"/>
<rect x="249" y="374" width="1" height="2" fill="#808080"/>
<rect x="292" y="286" width="1" height="2" fill="#808080"/>
<rect x="292" y="374" width="1" height="2" fill="#808080"/>
<rect x="336" y="286" width="1" height="2" fill="#808080"/>
<rect x="336" y="374" width="1" height="2" fill="#808080"/>
<rect x="379" y="286" width="1" height="6" fill="#808080"/>
<rect x="379" y="370" width="1" height="6" fill="#808080"/>
<rect x="423" y="286" width="1" height="2" fill="#808080"/>
<rect x="423" y="374" width="1" height="2" fill="#808080"/>
<rect x="467" y="286" width="1" height="2" fill="#808080"/>
<rect x="467" y="374" width="1" height="2" fill="#808080"/>
<rect x="510" y="286" width="1" height="2" fill="#808080"/>
<rect x="510" y="374" width="1" height="2" fill="#808080"/>
<rect x="554" y="286" width="1" height="2" fill="#808080"/>
<rect x="554" y="374" width="1" height="2" fill="#808080"/>
<rect x="597" y="286" width="1" height="2" fill="#808080"/>
<rect x="597" y="374" width="1" height="2" fill="#808080"/>
<rect x="641" y="286" width="1" height="2" fill="#808080"/>
<rect x="641" y="374" width="1" height="2" fill="#808080"/>
<rect x="31" y="304" width="4" height="1" fill="#909090"/>
<rect x="31" y="322" width="4" height="1" fill="#909090"/>
<rect x="31" y="340" width="4" height="1" fill="#909090"/>
<rect x="31" y="358" width="12" height="1" fill="#a0a0a0"/>
<line x1="45" y1="358.5" x2="700" y2="358.5" stroke="#9a9a9a" stroke-width="1" stroke-dasharray="3,2"/>
<line x1="700.5" y1="286.55" x2="700.5" y2="376" stroke="#404040" stroke-width="1" stroke-dasharray="2.5,2.5"/>
<line x1="33" y1="286.25" x2="33" y2="376" stroke="#ff5a5a" stroke-width="1.6" stroke-dasharray="2.5,2.656"/>
<path d="M30.0,330.8 L31.0,331.2 L32.0,331.3 L33.0,331.0 L34.0,330.6 L35.0,330.3 L36.0,330.4 L37.0,330.8 L38.0,331.2 L39.0,331.3 L40.0,331.0 L41.0,330.6 L42.0,330.3 L43.0,330.4 L44.0,330.8 L45.0,331.2 L46.0,331.3 L47.0,331.0 L48.0,330.6 L49.0,330.3 L50.0,330.4 L51.0,330.8 L52.0,331.2 L53.0,331.3 L54.0,331.0 L55.0,330.6 L56.0,330.3 L57.0,330.4 L58.0,330.8 L59.0,331.2 L60.0,331.3 L61.0,331.0 L62.0,330.6 L63.0,330.3 L64.0,330.4 L65.0,330.8 L66.0,331.2 L67.0,331.3 L68.0,331.0 L69.0,330.6 L70.0,330.3 L71.0,330.4 L72.0,330.8 L73.0,331.2 L74.0,331.3 L75.0,331.0 L76.0,330.6 L77.0,330.3 L78.0,330.4 L79.0,330.8 L80.0,331.2 L81.0,331.3 L82.0,331.0 L83.0,330.6 L84.0,330.3 L85.0,330.4 L86.0,330.8 L87.0,331.2 L88.0,331.3 L89.0,331.0 L90.0,330.6 L91.0,330.3 L92.0,330.4 L93.0,330.8 L94.0,331.2 L95.0,331.3 L96.0,331.0 L97.0,330.6 L98.0,330.3 L99.0,330.4 L100.0,330.8 L101.0,331.2 L102.0,331.3 L103.0,331.0 L104.0,330.6 L105.0,330.3 L106.0,330.4 L107.0,330.8 L108.0,331.2 L109.0,331.3 L110.0,331.0 L111.0,330.6 L112.0,330.3 L113.0,330.4 L114.0,330.8 L115.0,331.2 L116.0,331.3 L117.0,331.0 L118.0,330.6 L119.0,330.3 L120.0,330.4 L121.0,330.8 L122.0,331.2 L123.0,331.3 L124.0,331.0 L125.0,330.6 L126.0,330.3 L127.0,330.4 L128.0,330.8 L129.0,331.2 L130.0,331.3 L131.0,331.0 L132.0,330.6 L133.0,330.3 L134.0,330.4 L135.0,330.8 L136.0,331.2 L137.0,331.3 L138.0,331.0 L139.0,330.6 L140.0,330.3 L141.0,330.4 L142.0,330.8 L143.0,331.2 L144.0,331.3 L145.0,331.0 L146.0,330.6 L147.0,330.3 L148.0,330.4 L149.0,330.8 L150.0,331.2 L151.0,331.3 L152.0,331.0 L153.0,330.6 L154.0,330.3 L155.0,330.4 L156.0,330.8 L157.0,331.2 L158.0,331.3 L159.0,331.0 L160.0,330.6 L161.0,330.3 L162.0,330.4 L163.0,330.8 L164.0,331.2 L165.0,331.3 L166.0,331.0 L167.0,330.6 L168.0,330.3 L169.0,330.4 L170.0,330.8 L171.0,331.2 L172.0,331.3 L173.0,331.0 L174.0,330.6 L175.0,330.3 L176.0,330.4 L177.0,330.8 L178.0,331.2 L179.0,331.3 L180.0,331.0 L181.0,330.6 L182.0,330.3 L183.0,330.4 L184.0,330.8 L185.0,331.2 L186.0,331.3 L187.0,331.0 L188.0,330.6 L189.0,330.3 L190.0,330.4 L191.0,330.8 L192.0,331.2 L193.0,331.3 L194.0,331.0 L195.0,330.6 L196.0,330.3 L197.0,330.4 L198.0,330.8 L199.0,331.2 L200.0,331.3 L201.0,331.0 L202.0,330.6 L203.0,330.3 L204.0,330.4 L205.0,330.8 L206.0,331.2 L207.0,331.3 L208.0,331.0 L209.0,330.6 L210.0,330.3 L211.0,330.4 L212.0,330.8 L213.0,331.2 L214.0,331.3 L215.0,331.0 L216.0,330.6 L217.0,330.3 L218.0,330.4 L219.0,330.8 L220.0,331.2 L221.0,331.3 L222.0,331.0 L223.0,330.6 L224.0,330.3 L225.0,330.4 L226.0,330.8 L227.0,331.2 L228.0,331.3 L229.0,331.0 L230.0,330.6 L231.0,330.3 L232.0,330.4 L233.0,330.8 L234.0,331.2 L235.0,331.3 L236.0,331.0 L237.0,330.6 L238.0,330.3 L239.0,330.4 L240.0,330.8 L241.0,331.2 L242.0,331.3 L243.0,331.0 L244.0,330.6 L245.0,330.3 L246.0,330.4 L247.0,330.8 L248.0,331.2 L249.0,331.3 L250.0,331.0 L251.0,330.6 L252.0,330.3 L253.0,330.4 L254.0,330.8 L255.0,331.2 L256.0,331.3 L257.0,331.0 L258.0,330.6 L259.0,330.3 L260.0,330.4 L261.0,330.8 L262.0,331.2 L263.0,331.3 L264.0,331.0 L265.0,330.6 L266.0,330.3 L267.0,330.4 L268.0,330.8 L269.0,331.2 L270.0,331.3 L271.0,331.0 L272.0,330.6 L273.0,330.3 L274.0,330.4 L275.0,330.8 L276.0,331.2 L277.0,331.3 L278.0,331.0 L279.0,330.6 L280.0,330.3 L281.0,330.4 L282.0,330.8 L283.0,331.2 L284.0,331.3 L285.0,331.0 L286.0,330.6 L287.0,330.3 L288.0,330.4 L289.0,330.8 L290.0,331.2 L291.0,331.3 L292.0,331.0 L293.0,330.6 L294.0,330.3 L295.0,330.4 L296.0,330.8 L297.0,331.2 L298.0,331.3 L299.0,331.0 L300.0,330.6 L301.0,330.3 L302.0,330.4 L303.0,330.8 L304.0,331.2 L305.0,331.3 L306.0,331.0 L307.0,330.6 L308.0,330.3 L309.0,330.4 L310.0,330.8 L311.0,331.2 L312.0,331.3 L313.0,331.0 L314.0,330.6 L315.0,330.3 L316.0,330.4 L317.0,330.8 L318.0,331.2 L319.0,331.3 L320.0,331.0 L321.0,330.6 L322.0,330.3 L323.0,330.4 L324.0,330.8 L325.0,331.2 L326.0,331.3 L327.0,331.0 L328.0,330.6 L329.0,330.3 L330.0,330.4 L331.0,330.8 L332.0,331.2 L333.0,331.3 L334.0,331.0 L335.0,330.6 L336.0,330.3 L337.0,330.4 L338.0,330.8 L339.0,331.2 L340.0,331.3 L341.0,331.0 L342.0,330.6 L343.0,330.3 L344.0,330.4 L345.0,330.8 L346.0,331.2 L347.0,331.3 L348.0,331.0 L349.0,330.6 L350.0,330.3 L351.0,330.4 L352.0,330.8 L353.0,331.2 L354.0,331.3 L355.0,331.0 L356.0,330.6 L357.0,330.3 L358.0,330.4 L359.0,330.8 L360.0,331.2 L361.0,331.3 L362.0,331.0 L363.0,330.6 L364.0,330.3 L365.0,330.4 L366.0,330.8 L367.0,331.2 L368.0,331.3 L369.0,331.0 L370.0,330.6 L371.0,330.3 L372.0,330.4 L373.0,330.8 L374.0,331.2 L375.0,331.3 L376.0,331.0 L377.0,330.6 L378.0,330.3 L379.0,330.4 L380.0,330.8 L381.0,331.2 L382.0,331.3 L383.0,331.0 L384.0,330.6 L385.0,330.3 L386.0,330.4 L387.0,330.8 L388.0,331.2 L389.0,331.3 L390.0,331.0 L391.0,330.6 L392.0,330.3 L393.0,330.4 L394.0,330.8 L395.0,331.2 L396.0,331.3 L397.0,331.0 L398.0,330.6 L399.0,330.3 L400.0,330.4 L401.0,330.8 L402.0,331.2 L403.0,331.3 L404.0,331.0 L405.0,330.6 L406.0,330.3 L407.0,330.4 L408.0,330.8 L409.0,331.2 L410.0,331.3 L411.0,331.0 L412.0,330.6 L413.0,330.3 L414.0,330.4 L415.0,330.8 L416.0,331.2 L417.0,331.3 L418.0,331.0 L419.0,330.6 L420.0,330.3 L421.0,330.4 L422.0,330.8 L423.0,331.2 L424.0,331.3 L425.0,331.0 L426.0,330.6 L427.0,330.3 L428.0,330.4 L429.0,330.8 L430.0,331.2 L431.0,331.3 L432.0,331.0 L433.0,330.6 L434.0,330.3 L435.0,330.4 L436.0,330.8 L437.0,331.2 L438.0,331.3 L439.0,331.0 L440.0,330.6 L441.0,330.3 L442.0,330.4 L443.0,330.8 L444.0,331.2 L445.0,331.3 L446.0,331.0 L447.0,330.6 L448.0,330.3 L449.0,330.4 L450.0,330.8 L451.0,331.2 L452.0,331.3 L453.0,331.0 L454.0,330.6 L455.0,330.3 L456.0,330.4 L457.0,330.8 L458.0,331.2 L459.0,331.3 L460.0,331.0 L461.0,330.6 L462.0,330.3 L463.0,330.4 L464.0,330.8 L465.0,331.2 L466.0,331.3 L467.0,331.0 L468.0,330.6 L469.0,330.3 L470.0,330.4 L471.0,330.8 L472.0,331.2 L473.0,331.3 L474.0,331.0 L475.0,330.6 L476.0,330.3 L477.0,330.4 L478.0,330.8 L479.0,331.2 L480.0,331.3 L481.0,331.0 L482.0,330.6 L483.0,330.3 L484.0,330.4 L485.0,330.8 L486.0,331.2 L487.0,331.3 L488.0,331.0 L489.0,330.6 L490.0,330.3 L491.0,330.4 L492.0,330.8 L493.0,331.2 L494.0,331.3 L495.0,331.0 L496.0,330.6 L497.0,330.3 L498.0,330.4 L499.0,330.8 L500.0,331.2 L501.0,331.3 L502.0,331.0 L503.0,330.6 L504.0,330.3 L505.0,330.4 L506.0,330.8 L507.0,331.2 L508.0,331.3 L509.0,331.0 L510.0,330.6 L511.0,330.3 L512.0,330.4 L513.0,330.8 L514.0,331.2 L515.0,331.3 L516.0,331.0 L517.0,330.6 L518.0,330.3 L519.0,330.4 L520.0,330.8 L521.0,331.2 L522.0,331.3 L523.0,331.0 L524.0,330.6 L525.0,330.3 L526.0,330.4 L527.0,330.8 L528.0,331.2 L529.0,331.3 L530.0,331.0 L531.0,330.6 L532.0,330.3 L533.0,330.4 L534.0,330.8 L535.0,331.2 L536.0,331.3 L537.0,331.0 L538.0,330.6 L539.0,330.3 L540.0,330.4 L541.0,330.8 L542.0,331.2 L543.0,331.3 L544.0,331.0 L545.0,330.6 L546.0,330.3 L547.0,330.4 L548.0,330.8 L549.0,331.2 L550.0,331.3 L551.0,331.0 L552.0,330.6 L553.0,330.3 L554.0,330.4 L555.0,330.8 L556.0,331.2 L557.0,331.3 L558.0,331.0 L559.0,330.6 L560.0,330.3 L561.0,330.4 L562.0,330.8 L563.0,331.2 L564.0,331.3 L565.0,331.0 L566.0,330.6 L567.0,330.3 L568.0,330.4 L569.0,330.8 L570.0,331.2 L571.0,331.3 L572.0,331.0 L573.0,330.6 L574.0,330.3 L575.0,330.4 L576.0,330.8 L577.0,331.2 L578.0,331.3 L579.0,331.0 L580.0,330.6 L581.0,330.3 L582.0,330.4 L583.0,330.8 L584.0,331.2 L585.0,331.3 L586.0,331.0 L587.0,330.6 L588.0,330.3 L589.0,330.4 L590.0,330.8 L591.0,331.2 L592.0,331.3 L593.0,331.0 L594.0,330.6 L595.0,330.3 L596.0,330.4 L597.0,330.8 L598.0,331.2 L599.0,331.3 L600.0,331.0 L601.0,330.6 L602.0,330.3 L603.0,330.4 L604.0,330.8 L605.0,331.2 L606.0,331.3 L607.0,331.0 L608.0,330.6 L609.0,330.3 L610.0,330.4 L611.0,330.8 L612.0,331.2 L613.0,331.3 L614.0,331.0 L615.0,330.6 L616.0,330.3 L617.0,330.4 L618.0,330.8 L619.0,331.2 L620.0,331.3 L621.0,331.0 L622.0,330.6 L623.0,330.3 L624.0,330.4 L625.0,330.8 L626.0,331.2 L627.0,331.3 L628.0,331.0 L629.0,330.6 L630.0,330.3 L631.0,330.4 L632.0,330.8 L633.0,331.2 L634.0,331.3 L635.0,331.0 L636.0,330.6 L637.0,330.3 L638.0,330.4 L639.0,330.8 L640.0,331.2 L641.0,331.3 L642.0,331.0 L643.0,330.6 L644.0,330.3 L645.0,330.4 L646.0,330.8 L647.0,331.2 L648.0,331.3 L649.0,331.0 L650.0,330.6 L651.0,330.3 L652.0,330.4 L653.0,330.8 L654.0,331.2 L655.0,331.3 L656.0,331.0 L657.0,330.6 L658.0,330.3 L659.0,330.4 L660.0,330.8 L661.0,331.2 L662.0,331.3 L663.0,331.0 L664.0,330.6 L665.0,330.3 L666.0,330.4 L667.0,330.8 L668.0,331.2 L669.0,331.3 L670.0,331.0 L671.0,330.6 L672.0,330.3 L673.0,330.4 L674.0,330.8 L675.0,331.2 L676.0,331.3 L677.0,331.0 L678.0,330.6 L679.0,330.3 L680.0,330.4 L681.0,330.8 L682.0,331.2 L683.0,331.3 L684.0,331.0 L685.0,330.6 L686.0,330.3 L687.0,330.4 L688.0,330.8 L689.0,331.2 L690.0,331.3 L691.0,331.0 L692.0,330.6 L693.0,330.3 L694.0,330.4 L695.0,330.8 L696.0,331.2 L697.0,331.3 L698.0,331.0 L699.0,330.6 L700.0,330.3" fill="none" stroke="#464646" stroke-width="1"/>
<text x="34.5" y="297" class="lb">+8V</text>
<text x="34" y="370" class="lb">-2V</text>
<text x="203.6" y="297" class="lb" text-anchor="middle">VIN</text>
<text x="281.5" y="297" class="lb">Max : 3.06 V</text>
<text x="401" y="297" class="lb">Avg : 2.92 V</text>
<text x="520.5" y="297" class="lb">Min : 2.79 V</text>
<rect x="641" y="291" width="13" height="13" fill="#b8c4d8"/><rect x="641" y="291" width="12" height="12" fill="#4a6cb0"/><rect x="642" y="292" width="11" height="11" fill="#fff"/>
<rect x="657.5" y="289.5" width="19" height="18" fill="#e2e7f0" stroke="#7c8496" stroke-width="1"/>
<rect x="659" y="291" width="16" height="15" rx="1.5" fill="none" stroke="#f4f7fb" stroke-width="1"/>
<path transform="translate(657,289)" d="M0,0 h3.5 l-3.5,3.5 z" fill="#1e3c78"/>
<path transform="translate(677,289)" d="M0,0 h-3.5 l3.5,3.5 z" fill="#1e3c78"/>
<path transform="translate(657,308)" d="M0,0 h3.5 l-3.5,-3.5 z" fill="#1e3c78"/>
<path transform="translate(677,308)" d="M0,0 h-3.5 l3.5,-3.5 z" fill="#1e3c78"/>
<path d="M665.5,292.8 h3.5 v3.7 h4 v3.6 h-4 v3.9 h-3.5 v-3.9 h-4.2 v-3.6 h4.2 z" fill="#a9adb5" stroke="#8e939c" stroke-width="0.8"/>
<rect x="679.5" y="289.5" width="19" height="18" fill="#e2e7f0" stroke="#7c8496" stroke-width="1"/>
<rect x="681" y="291" width="16" height="15" rx="1.5" fill="none" stroke="#f4f7fb" stroke-width="1"/>
<path transform="translate(679,289)" d="M0,0 h3.5 l-3.5,3.5 z" fill="#1e3c78"/>
<path transform="translate(699,289)" d="M0,0 h-3.5 l3.5,3.5 z" fill="#1e3c78"/>
<path transform="translate(679,308)" d="M0,0 h3.5 l-3.5,-3.5 z" fill="#1e3c78"/>
<path transform="translate(699,308)" d="M0,0 h-3.5 l3.5,-3.5 z" fill="#1e3c78"/>
<path d="M684.5,294 L693.5,303.5 M693.5,294 L684.5,303.5" stroke="#8a8e98" stroke-width="2.6" stroke-linecap="round"/>
<path d="M684.5,294 L693.5,303.5 M693.5,294 L684.5,303.5" stroke="#eef1f6" stroke-width="1.1" stroke-linecap="round"/>
<rect x="30" y="377" width="672" height="4" fill="#ffffff"/>
<rect x="30" y="381" width="672" height="1" fill="#404040"/>
<rect x="31" y="381" width="671" height="91" fill="#f8f8f8"/>
<rect x="30" y="381" width="672" height="1" fill="#3a3a3a"/>
<rect x="30" y="472" width="672" height="1" fill="#7a7a7a"/>
<rect x="74" y="382" width="1" height="2" fill="#808080"/>
<rect x="74" y="470" width="1" height="2" fill="#808080"/>
<rect x="118" y="382" width="1" height="2" fill="#808080"/>
<rect x="118" y="470" width="1" height="2" fill="#808080"/>
<rect x="161" y="382" width="1" height="2" fill="#808080"/>
<rect x="161" y="470" width="1" height="2" fill="#808080"/>
<rect x="205" y="382" width="1" height="2" fill="#808080"/>
<rect x="205" y="470" width="1" height="2" fill="#808080"/>
<rect x="249" y="382" width="1" height="2" fill="#808080"/>
<rect x="249" y="470" width="1" height="2" fill="#808080"/>
<rect x="292" y="382" width="1" height="2" fill="#808080"/>
<rect x="292" y="470" width="1" height="2" fill="#808080"/>
<rect x="336" y="382" width="1" height="2" fill="#808080"/>
<rect x="336" y="470" width="1" height="2" fill="#808080"/>
<rect x="379" y="382" width="1" height="6" fill="#808080"/>
<rect x="379" y="466" width="1" height="6" fill="#808080"/>
<rect x="423" y="382" width="1" height="2" fill="#808080"/>
<rect x="423" y="470" width="1" height="2" fill="#808080"/>
<rect x="467" y="382" width="1" height="2" fill="#808080"/>
<rect x="467" y="470" width="1" height="2" fill="#808080"/>
<rect x="510" y="382" width="1" height="2" fill="#808080"/>
<rect x="510" y="470" width="1" height="2" fill="#808080"/>
<rect x="554" y="382" width="1" height="2" fill="#808080"/>
<rect x="554" y="470" width="1" height="2" fill="#808080"/>
<rect x="597" y="382" width="1" height="2" fill="#808080"/>
<rect x="597" y="470" width="1" height="2" fill="#808080"/>
<rect x="641" y="382" width="1" height="2" fill="#808080"/>
<rect x="641" y="470" width="1" height="2" fill="#808080"/>
<rect x="31" y="400" width="4" height="1" fill="#909090"/>
<rect x="31" y="418" width="4" height="1" fill="#909090"/>
<rect x="31" y="436" width="4" height="1" fill="#909090"/>
<rect x="31" y="454" width="12" height="1" fill="#a0a0a0"/>
<line x1="45" y1="454.5" x2="700" y2="454.5" stroke="#9a9a9a" stroke-width="1" stroke-dasharray="3,2"/>
<line x1="700.5" y1="382.55" x2="700.5" y2="472" stroke="#404040" stroke-width="1" stroke-dasharray="2.5,2.5"/>
<line x1="33" y1="382.25" x2="33" y2="472" stroke="#ff5a5a" stroke-width="1.6" stroke-dasharray="2.5,2.656"/>
<path d="M30.0,429.6 L31.0,429.6 L32.0,429.6 L33.0,429.6 L34.0,429.6 L35.0,429.6 L36.0,429.6 L37.0,429.6 L38.0,429.6 L39.0,429.6 L40.0,429.6 L41.0,429.6 L42.0,429.6 L43.0,429.6 L44.0,429.6 L45.0,429.6 L46.0,429.6 L47.0,429.7 L48.0,429.8 L49.0,429.9 L50.0,430.0 L51.0,430.1 L52.0,430.4 L53.0,431.0 L54.0,431.9 L55.0,432.8 L56.0,433.7 L57.0,434.3 L58.0,434.6 L59.0,434.6 L60.0,434.6 L61.0,434.6 L62.0,434.6 L63.0,434.6 L64.0,434.6 L65.0,434.6 L66.0,434.6 L67.0,434.6 L68.0,434.6 L69.0,434.6 L70.0,434.6 L71.0,434.6 L72.0,434.6 L73.0,434.6 L74.0,434.6 L75.0,434.6 L76.0,434.6 L77.0,435.3 L78.0,435.3 L79.0,435.3 L80.0,435.3 L81.0,434.6 L82.0,434.6 L83.0,434.6 L84.0,434.6 L85.0,434.6 L86.0,434.6 L87.0,434.6 L88.0,434.6 L89.0,434.6 L90.0,434.6 L91.0,434.6 L92.0,434.6 L93.0,434.6 L94.0,434.6 L95.0,434.6 L96.0,434.6 L97.0,434.6 L98.0,434.6 L99.0,434.6 L100.0,434.6 L101.0,434.6 L102.0,434.6 L103.0,434.6 L104.0,434.6 L105.0,434.6 L106.0,434.6 L107.0,434.6 L108.0,434.6 L109.0,434.6 L110.0,434.6 L111.0,435.3 L112.0,435.3 L113.0,434.6 L114.0,434.6 L115.0,434.6 L116.0,434.6 L117.0,434.6 L118.0,434.6 L119.0,434.6 L120.0,434.6 L121.0,434.6 L122.0,435.3 L123.0,435.3 L124.0,434.6 L125.0,434.6 L126.0,434.6 L127.0,434.6 L128.0,434.6 L129.0,434.6 L130.0,434.6 L131.0,434.6 L132.0,434.6 L133.0,434.6 L134.0,434.6 L135.0,434.6 L136.0,434.6 L137.0,434.6 L138.0,434.6 L139.0,434.6 L140.0,434.6 L141.0,433.8 L142.0,433.8 L143.0,433.8 L144.0,433.8 L145.0,433.8 L146.0,433.8 L147.0,433.8 L148.0,433.8 L149.0,433.8 L150.0,433.8 L151.0,433.8 L152.0,433.8 L153.0,433.8 L154.0,433.8 L155.0,433.6 L156.0,433.3 L157.0,432.9 L158.0,432.3 L159.0,431.8 L160.0,431.3 L161.0,430.8 L162.0,429.8 L163.0,429.6 L164.0,429.6 L165.0,430.1 L166.0,430.0 L167.0,429.9 L168.0,429.8 L169.0,429.7 L170.0,429.6 L171.0,429.6 L172.0,429.6 L173.0,429.6 L174.0,429.6 L175.0,429.6 L176.0,429.6 L177.0,429.6 L178.0,429.6 L179.0,429.6 L180.0,429.6 L181.0,429.6 L182.0,429.6 L183.0,429.6 L184.0,429.6 L185.0,430.3 L186.0,430.3 L187.0,430.3 L188.0,430.4 L189.0,430.1 L190.0,430.6 L191.0,431.3 L192.0,432.1 L193.0,432.9 L194.0,433.6 L195.0,434.1 L196.0,434.5 L197.0,434.6 L198.0,434.7 L199.0,434.7 L200.0,434.8 L201.0,434.9 L202.0,435.0 L203.0,435.0 L204.0,435.1 L205.0,435.2 L206.0,435.2 L207.0,436.0 L208.0,436.0 L209.0,436.0 L210.0,435.3 L211.0,435.3 L212.0,435.3 L213.0,435.3 L214.0,435.3 L215.0,435.3 L216.0,435.2 L217.0,435.2 L218.0,435.2 L219.0,435.2 L220.0,435.2 L221.0,435.2 L222.0,435.2 L223.0,435.2 L224.0,435.2 L225.0,435.2 L226.0,435.2 L227.0,435.2 L228.0,435.2 L229.0,435.2 L230.0,435.2 L231.0,435.2 L232.0,435.2 L233.0,435.2 L234.0,435.1 L235.0,435.1 L236.0,435.1 L237.0,435.1 L238.0,435.1 L239.0,435.1 L240.0,435.1 L241.0,435.1 L242.0,435.1 L243.0,435.1 L244.0,435.1 L245.0,435.1 L246.0,435.1 L247.0,435.1 L248.0,435.1 L249.0,435.1 L250.0,435.1 L251.0,435.1 L252.0,435.0 L253.0,435.0 L254.0,435.0 L255.0,434.3 L256.0,434.3 L257.0,435.0 L258.0,435.0 L259.0,435.0 L260.0,435.0 L261.0,435.0 L262.0,435.0 L263.0,435.0 L264.0,435.0 L265.0,435.0 L266.0,435.0 L267.0,435.0 L268.0,435.0 L269.0,434.9 L270.0,434.9 L271.0,434.9 L272.0,434.9 L273.0,434.9 L274.0,434.9 L275.0,434.9 L276.0,435.6 L277.0,435.6 L278.0,435.6 L279.0,435.6 L280.0,434.9 L281.0,434.9 L282.0,434.9 L283.0,434.9 L284.0,434.9 L285.0,434.9 L286.0,434.9 L287.0,434.8 L288.0,434.8 L289.0,434.8 L290.0,434.8 L291.0,434.8 L292.0,434.8 L293.0,434.8 L294.0,434.8 L295.0,434.8 L296.0,433.8 L297.0,433.8 L298.0,433.8 L299.0,433.8 L300.0,433.8 L301.0,433.8 L302.0,433.8 L303.0,433.8 L304.0,433.8 L305.0,433.8 L306.0,433.8 L307.0,433.8 L308.0,433.8 L309.0,433.8 L310.0,433.2 L311.0,432.1 L312.0,430.9 L313.0,429.9 L314.0,429.6 L315.0,429.6 L316.0,430.3 L317.0,430.3 L318.0,430.3 L319.0,430.3 L320.0,429.6 L321.0,429.6 L322.0,429.6 L323.0,429.6 L324.0,429.6 L325.0,429.6 L326.0,429.6 L327.0,429.6 L328.0,429.6 L329.0,429.6 L330.0,429.6 L331.0,429.6 L332.0,429.6 L333.0,429.6 L334.0,429.9 L335.0,430.7 L336.0,432.0 L337.0,433.3 L338.0,434.9 L339.0,435.3 L340.0,435.4 L341.0,434.8 L342.0,434.8 L343.0,434.9 L344.0,435.0 L345.0,435.1 L346.0,435.2 L347.0,435.3 L348.0,435.3 L349.0,435.3 L350.0,435.3 L351.0,435.3 L352.0,435.3 L353.0,435.3 L354.0,435.3 L355.0,435.3 L356.0,435.3 L357.0,435.3 L358.0,435.3 L359.0,435.3 L360.0,435.3 L361.0,435.2 L362.0,435.2 L363.0,435.2 L364.0,435.2 L365.0,435.2 L366.0,435.2 L367.0,435.2 L368.0,435.2 L369.0,435.2 L370.0,435.2 L371.0,435.2 L372.0,435.2 L373.0,435.2 L374.0,435.2 L375.0,435.2 L376.0,435.2 L377.0,435.2 L378.0,435.2 L379.0,435.2 L380.0,435.2 L381.0,435.2 L382.0,435.2 L383.0,435.2 L384.0,435.2 L385.0,435.2 L386.0,435.1 L387.0,435.1 L388.0,435.1 L389.0,435.1 L390.0,435.1 L391.0,435.1 L392.0,435.1 L393.0,435.1 L394.0,435.1 L395.0,435.1 L396.0,435.1 L397.0,435.1 L398.0,435.1 L399.0,435.1 L400.0,435.1 L401.0,435.0 L402.0,435.0 L403.0,435.0 L404.0,435.0 L405.0,434.9 L406.0,434.9 L407.0,434.9 L408.0,434.9 L409.0,434.8 L410.0,434.8 L411.0,434.8 L412.0,434.8 L413.0,434.7 L414.0,434.7 L415.0,434.7 L416.0,434.7 L417.0,434.6 L418.0,434.6 L419.0,433.6 L420.0,433.6 L421.0,433.6 L422.0,433.6 L423.0,434.3 L424.0,434.3 L425.0,434.3 L426.0,433.6 L427.0,433.6 L428.0,433.6 L429.0,433.6 L430.0,433.6 L431.0,433.6 L432.0,433.6 L433.0,433.6 L434.0,433.6 L435.0,433.6 L436.0,433.6 L437.0,433.6 L438.0,433.6 L439.0,433.6 L440.0,433.6 L441.0,433.6 L442.0,433.6 L443.0,433.6 L444.0,433.6 L445.0,433.6 L446.0,433.6 L447.0,433.5 L448.0,433.3 L449.0,433.0 L450.0,432.6 L451.0,432.1 L452.0,431.6 L453.0,431.1 L454.0,430.6 L455.0,430.9 L456.0,430.6 L457.0,429.7 L458.0,429.6 L459.0,429.6 L460.0,429.6 L461.0,429.6 L462.0,429.6 L463.0,429.6 L464.0,429.6 L465.0,429.6 L466.0,429.6 L467.0,429.6 L468.0,429.6 L469.0,429.6 L470.0,429.6 L471.0,429.6 L472.0,429.6 L473.0,429.6 L474.0,429.6 L475.0,429.6 L476.0,429.6 L477.0,429.6 L478.0,429.6 L479.0,429.6 L480.0,429.6 L481.0,429.6 L482.0,429.8 L483.0,430.2 L484.0,430.9 L485.0,431.7 L486.0,432.5 L487.0,433.2 L488.0,433.8 L489.0,434.1 L490.0,434.1 L491.0,434.1 L492.0,433.4 L493.0,433.4 L494.0,434.1 L495.0,434.2 L496.0,434.2 L497.0,434.2 L498.0,434.2 L499.0,434.2 L500.0,434.2 L501.0,434.2 L502.0,434.2 L503.0,434.2 L504.0,434.3 L505.0,434.3 L506.0,434.3 L507.0,434.3 L508.0,434.3 L509.0,434.3 L510.0,434.3 L511.0,434.3 L512.0,434.3 L513.0,434.3 L514.0,434.4 L515.0,434.4 L516.0,434.4 L517.0,434.4 L518.0,434.4 L519.0,434.4 L520.0,434.4 L521.0,434.4 L522.0,434.4 L523.0,434.5 L524.0,434.5 L525.0,434.5 L526.0,434.5 L527.0,433.8 L528.0,433.8 L529.0,433.8 L530.0,434.5 L531.0,434.5 L532.0,434.6 L533.0,434.6 L534.0,434.6 L535.0,434.6 L536.0,434.6 L537.0,434.6 L538.0,434.6 L539.0,434.6 L540.0,434.6 L541.0,434.6 L542.0,434.7 L543.0,434.7 L544.0,434.7 L545.0,434.7 L546.0,435.4 L547.0,435.4 L548.0,435.4 L549.0,434.7 L550.0,434.7 L551.0,434.8 L552.0,434.8 L553.0,434.8 L554.0,434.8 L555.0,434.8 L556.0,434.8 L557.0,434.7 L558.0,434.6 L559.0,435.0 L560.0,434.8 L561.0,434.4 L562.0,434.0 L563.0,432.9 L564.0,432.5 L565.0,432.1 L566.0,431.7 L567.0,431.3 L568.0,431.0 L569.0,430.0 L570.0,429.8 L571.0,429.7 L572.0,430.3 L573.0,430.4 L574.0,430.4 L575.0,430.5 L576.0,430.6 L577.0,430.7 L578.0,430.8 L579.0,430.9 L580.0,431.0 L581.0,431.0 L582.0,430.4 L583.0,430.5 L584.0,430.6 L585.0,430.6 L586.0,431.2 L587.0,431.2 L588.0,431.1 L589.0,431.0 L590.0,430.8 L591.0,430.7 L592.0,430.5 L593.0,430.4 L594.0,429.5 L595.0,429.4 L596.0,429.9 L597.0,429.8 L598.0,429.7 L599.0,429.7 L600.0,429.6 L601.0,429.6 L602.0,429.6 L603.0,429.6 L604.0,429.6 L605.0,429.6 L606.0,429.6 L607.0,429.6 L608.0,430.3 L609.0,430.3 L610.0,429.6 L611.0,429.6 L612.0,429.6 L613.0,429.6 L614.0,429.9 L615.0,430.5 L616.0,431.4 L617.0,432.5 L618.0,433.4 L619.0,434.2 L620.0,434.6 L621.0,434.7 L622.0,434.7 L623.0,434.7 L624.0,434.7 L625.0,434.7 L626.0,434.7 L627.0,434.7 L628.0,434.7 L629.0,434.7 L630.0,434.7 L631.0,434.7 L632.0,434.7 L633.0,434.7 L634.0,434.7 L635.0,434.7 L636.0,434.7 L637.0,434.7 L638.0,434.7 L639.0,434.7 L640.0,434.7 L641.0,434.7 L642.0,434.7 L643.0,434.7 L644.0,434.7 L645.0,434.7 L646.0,434.7 L647.0,434.7 L648.0,434.7 L649.0,434.7 L650.0,434.7 L651.0,435.4 L652.0,435.4 L653.0,434.7 L654.0,434.7 L655.0,434.7 L656.0,434.7 L657.0,434.7 L658.0,434.7 L659.0,434.7 L660.0,434.7 L661.0,434.7 L662.0,434.7 L663.0,434.7 L664.0,434.7 L665.0,434.7 L666.0,434.7 L667.0,434.7 L668.0,434.7 L669.0,434.7 L670.0,434.7 L671.0,434.7 L672.0,434.7 L673.0,434.7 L674.0,434.7 L675.0,434.7 L676.0,434.7 L677.0,434.7 L678.0,434.7 L679.0,434.7 L680.0,434.7 L681.0,434.7 L682.0,434.7 L683.0,435.4 L684.0,435.4 L685.0,434.7 L686.0,434.7 L687.0,434.7 L688.0,434.7 L689.0,434.7 L690.0,434.7 L691.0,434.7 L692.0,434.7 L693.0,434.7 L694.0,434.7 L695.0,434.7 L696.0,434.7 L697.0,434.7 L698.0,434.7 L699.0,434.7 L700.0,434.7" fill="none" stroke="#464646" stroke-width="1"/>
<text x="34.5" y="393" class="lb">+8V</text>
<text x="34" y="466" class="lb">-2V</text>
<text x="203.6" y="393" class="lb" text-anchor="middle">VRC</text>
<text x="281.5" y="393" class="lb">Max : 2.75 V</text>
<text x="401" y="393" class="lb">Avg : 2.24 V</text>
<text x="520.5" y="393" class="lb">Min : 2.00 V</text>
<rect x="641" y="387" width="13" height="13" fill="#b8c4d8"/><rect x="641" y="387" width="12" height="12" fill="#4a6cb0"/><rect x="642" y="388" width="11" height="11" fill="#fff"/>
<rect x="657.5" y="385.5" width="19" height="18" fill="#e2e7f0" stroke="#7c8496" stroke-width="1"/>
<rect x="659" y="387" width="16" height="15" rx="1.5" fill="none" stroke="#f4f7fb" stroke-width="1"/>
<path transform="translate(657,385)" d="M0,0 h3.5 l-3.5,3.5 z" fill="#1e3c78"/>
<path transform="translate(677,385)" d="M0,0 h-3.5 l3.5,3.5 z" fill="#1e3c78"/>
<path transform="translate(657,404)" d="M0,0 h3.5 l-3.5,-3.5 z" fill="#1e3c78"/>
<path transform="translate(677,404)" d="M0,0 h-3.5 l3.5,-3.5 z" fill="#1e3c78"/>
<path d="M665.5,388.8 h3.5 v3.7 h4 v3.6 h-4 v3.9 h-3.5 v-3.9 h-4.2 v-3.6 h4.2 z" fill="#a9adb5" stroke="#8e939c" stroke-width="0.8"/>
<rect x="679.5" y="385.5" width="19" height="18" fill="#e2e7f0" stroke="#7c8496" stroke-width="1"/>
<rect x="681" y="387" width="16" height="15" rx="1.5" fill="none" stroke="#f4f7fb" stroke-width="1"/>
<path transform="translate(679,385)" d="M0,0 h3.5 l-3.5,3.5 z" fill="#1e3c78"/>
<path transform="translate(699,385)" d="M0,0 h-3.5 l3.5,3.5 z" fill="#1e3c78"/>
<path transform="translate(679,404)" d="M0,0 h3.5 l-3.5,-3.5 z" fill="#1e3c78"/>
<path transform="translate(699,404)" d="M0,0 h-3.5 l3.5,-3.5 z" fill="#1e3c78"/>
<path d="M684.5,390 L693.5,399.5 M693.5,390 L684.5,399.5" stroke="#8a8e98" stroke-width="2.6" stroke-linecap="round"/>
<path d="M684.5,390 L693.5,399.5 M693.5,390 L684.5,399.5" stroke="#eef1f6" stroke-width="1.1" stroke-linecap="round"/>
<path d="M692.8,461.6 H697 Q698.3,461.6 698.3,463.2 Q698.3,465 697,465.5 Q698.5,466 698.5,467.8 Q698.5,469.6 697,469.6 H692.8 Z" fill="#fbfbfb" stroke="#6a6a6a" stroke-width="1.2"/>
<rect x="693.5" y="465" width="4.5" height="1" fill="#1a1a1a"/>
</svg>
</div></body></html>
